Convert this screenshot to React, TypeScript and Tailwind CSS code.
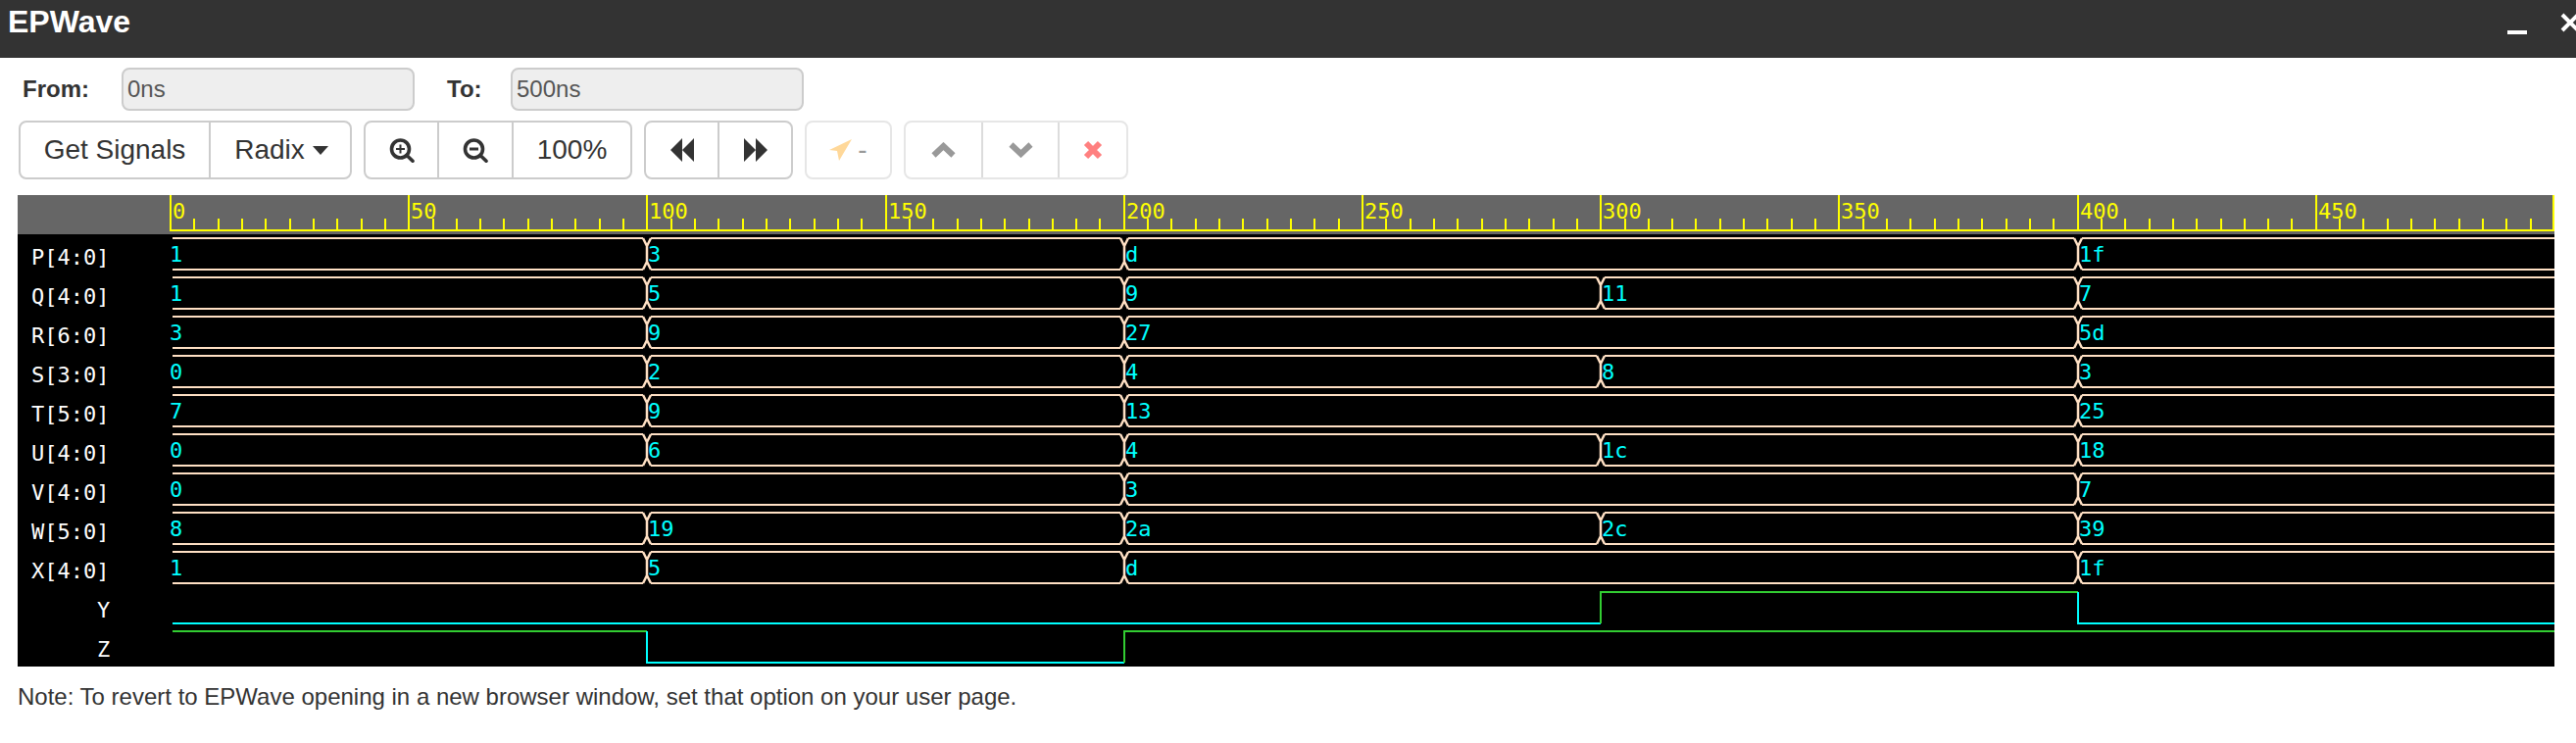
const X0 = 173;
const PX_PER_NS = 4.864;
const xAt = (ns: number) => Math.round(X0 + ns * PX_PER_NS);

// values at 0, 100, 200, 300, 400 ns (null = no change)
const BUSES: Array<[string, Array<string | null>]> = [
  ["P[4:0]", ["1", "3", "d", null, "1f"]],
  ["Q[4:0]", ["1", "5", "9", "11", "7"]],
  ["R[6:0]", ["3", "9", "27", null, "5d"]],
  ["S[3:0]", ["0", "2", "4", "8", "3"]],
  ["T[5:0]", ["7", "9", "13", null, "25"]],
  ["U[4:0]", ["0", "6", "4", "1c", "18"]],
  ["V[4:0]", ["0", null, "3", null, "7"]],
  ["W[5:0]", ["8", "19", "2a", "2c", "39"]],
  ["X[4:0]", ["1", "5", "d", null, "1f"]],
];

const BISQUE = "#ffe0c4";
const GREEN = "#32cd32";
const CYAN = "#00ffff";
const RIGHT = 2606;

function Bus({ index, label, values }: { index: number; label: string; values: Array<string | null> }) {
  const top = 243 + index * 40;
  const bottom = top + 32;
  const changes = values.map((v, i) => (v === null ? -1 : i)).filter((i) => i >= 0);
  return (
    <g>
      <text x={32} y={top + 27} fill="#fff" fontSize={22}>
        {label}
      </text>
      {changes.map((i, n) => {
        const xc = xAt(i * 100) + 1;
        const start = i === 0 ? 176 : xc + 4;
        const next = changes[n + 1];
        const end = next === undefined ? RIGHT : xAt(next * 100) + 1 - 4;
        return (
          <g key={i}>
            <path d={`M${start} ${top}H${end}M${start} ${bottom}H${end}`} stroke={BISQUE} strokeWidth={2} shapeRendering="crispEdges" />
            {i > 0 && (
              <path
                d={`M${xc - 4} ${top}L${xc} ${top + 8}L${xc + 4} ${top}M${xc - 4} ${bottom}L${xc} ${bottom - 8}L${xc + 4} ${bottom}M${xc} ${top + 8}V${bottom - 8}`}
                stroke={BISQUE}
                strokeWidth={2.5}
                fill="none"
              />
            )}
            <text x={i === 0 ? 173 : xc + 1} y={top + 24} fill={CYAN} fontSize={22}>
              {values[i]}
            </text>
          </g>
        );
      })}
    </g>
  );
}

function Waveform() {
  const ticks: number[] = [];
  for (let ns = 0; ns < 500; ns += 5) ticks.push(ns);
  return (
    <svg
      viewBox="18 199 2588 481"
      className="block h-[481px] w-[2588px] bg-black"
      style={{ fontFamily: '"DejaVu Sans Mono", monospace' }}
    >
      <rect x={18} y={199} width={2588} height={40} fill="#666" />
      <g stroke="#ffff00" strokeWidth={2} shapeRendering="crispEdges">
        <path d={`M173 235H${RIGHT}`} />
        {ticks.map((ns) => (
          <path key={ns} d={`M${xAt(ns) + 1} ${ns % 50 === 0 ? 199 : 223}V235`} />
        ))}
        <path d={`M${RIGHT - 1} 199V235`} />
      </g>
      {ticks
        .filter((ns) => ns % 50 === 0)
        .map((ns) => (
          <text key={ns} x={xAt(ns) + 3} y={223} fill="#ffff00" fontSize={22}>
            {ns}
          </text>
        ))}
      {BUSES.map(([label, values], i) => (
        <Bus key={label} index={i} label={label} values={values} />
      ))}
      <text x={99} y={630} fill="#fff" fontSize={22}>
        Y
      </text>
      <text x={99} y={670} fill="#fff" fontSize={22}>
        Z
      </text>
      <g fill="none" strokeWidth={2} shapeRendering="crispEdges">
        <path d={`M176 636H${xAt(300) + 1}`} stroke={CYAN} />
        <path d={`M${xAt(300) + 1} 636V604H${xAt(400) + 1}`} stroke={GREEN} />
        <path d={`M${xAt(400) + 1} 604V636H${RIGHT}`} stroke={CYAN} />
        <path d={`M176 644H${xAt(100) + 1}`} stroke={GREEN} />
        <path d={`M${xAt(100) + 1} 644V676H${xAt(200) + 1}`} stroke={CYAN} />
        <path d={`M${xAt(200) + 1} 676V644H${RIGHT}`} stroke={GREEN} />
      </g>
    </svg>
  );
}

function Segment({ width, children }: { width: string; children: React.ReactNode }) {
  return <div className={`flex h-full items-center justify-center border-l-2 first:border-l-0 ${width}`}>{children}</div>;
}

function Group({ children, faded }: { children: React.ReactNode; faded?: boolean }) {
  return (
    <div
      className={`flex h-[60px] items-center rounded-lg border-2 bg-white ${
        faded ? "border-[#e6e6e6] [&>div]:border-[#dcdcdc]" : "border-[#ccc] [&>div]:border-[#ccc]"
      }`}
    >
      {children}
    </div>
  );
}

function Rewind({ flip }: { flip?: boolean }) {
  return (
    <svg width="24" height="24" viewBox="0 0 24 24" className={flip ? "-scale-x-100" : ""}>
      <path d="M12 0V24L0 12ZM24 0V24L12 12Z" fill="#333" />
    </svg>
  );
}

function Magnifier({ plus }: { plus?: boolean }) {
  return (
    <svg width="26" height="25" viewBox="0 0 26 25" fill="none" stroke="#333">
      <circle cx="11.5" cy="11" r="9" strokeWidth="3.6" />
      <path d="M18 17.5L24 23.3" strokeWidth="3.6" strokeLinecap="round" />
      {plus ? <path d="M11.5 6.5V15.5M7 11H16" strokeWidth="2" /> : <path d="M7 11H16" strokeWidth="3" />}
    </svg>
  );
}

function Chevron({ down }: { down?: boolean }) {
  return (
    <svg width="25" height="16" viewBox="0 0 25 16" className={down ? "-scale-y-100" : ""}>
      <path d="M2.5 13.5L12.5 4L22.5 13.5" fill="none" stroke="#999" strokeWidth="6" />
    </svg>
  );
}

export default function App() {
  return (
    <div className="h-[758px] w-[2628px] overflow-hidden bg-white text-[#333]" style={{ fontFamily: '"Liberation Sans", Arial, sans-serif' }}>
      <div className="relative flex h-[59px] items-start bg-[#333] pl-2 pt-1 text-[32px] font-bold leading-[37px] text-white">
        EPWave
        <div className="absolute left-[2558px] top-[31px] h-1 w-5 bg-white" />
        <svg width="20" height="20" viewBox="0 0 20 20" className="absolute left-[2612px] top-[13px]">
          <path d="M2 2L18 18M18 2L2 18" stroke="#fff" strokeWidth="4" />
        </svg>
      </div>
      <div className="mt-[10px] flex h-[44px] items-center pl-[23px] text-[24px]">
        <span className="w-[101px] font-bold">From:</span>
        <div className="flex h-full w-[299px] items-center rounded-lg border-2 border-[#ccc] bg-[#eee] pl-1 text-[#555]">0ns</div>
        <span className="ml-[33px] w-[65px] font-bold">To:</span>
        <div className="flex h-full w-[299px] items-center rounded-lg border-2 border-[#ccc] bg-[#eee] pl-1 text-[#555]">500ns</div>
      </div>
      <div className="ml-[19px] mt-[10px] flex gap-3 text-[28px]">
        <Group>
          <Segment width="w-[192px]">Get Signals</Segment>
          <Segment width="w-[144px] pl-[2px]">
            Radix
            <span className="ml-2 h-0 w-0 border-x-[8px] border-t-[9px] border-x-transparent border-t-[#333]" />
          </Segment>
        </Group>
        <Group>
          <Segment width="w-[73px]">
            <Magnifier plus />
          </Segment>
          <Segment width="w-[76px]">
            <Magnifier />
          </Segment>
          <Segment width="w-[121px]">100%</Segment>
        </Group>
        <Group>
          <Segment width="w-[73px]">
            <Rewind />
          </Segment>
          <Segment width="w-[75px]">
            <Rewind flip />
          </Segment>
        </Group>
        <Group faded>
          <Segment width="w-[85px]">
            <svg width="23" height="22" viewBox="0 0 23 22" className="shrink-0">
              <path d="M0 11L23 0L10 22L8 12Z" fill="#ffd899" />
            </svg>
            <span className="ml-[6px] text-[#999]">-</span>
          </Segment>
        </Group>
        <Group faded>
          <Segment width="w-[77px]">
            <Chevron />
          </Segment>
          <Segment width="w-[78px]">
            <Chevron down />
          </Segment>
          <Segment width="w-[70px]">
            <svg width="20" height="20" viewBox="0 0 20 20">
              <path d="M3 3L17 17M17 3L3 17" stroke="#ff8080" strokeWidth="6" />
            </svg>
          </Segment>
        </Group>
      </div>
      <div className="ml-[18px] mt-4">
        <Waveform />
      </div>
      <p className="ml-[18px] mt-[15px] text-[24px] leading-[32px]">
        Note: To revert to EPWave opening in a new browser window, set that option on your user page.
      </p>
    </div>
  );
}
